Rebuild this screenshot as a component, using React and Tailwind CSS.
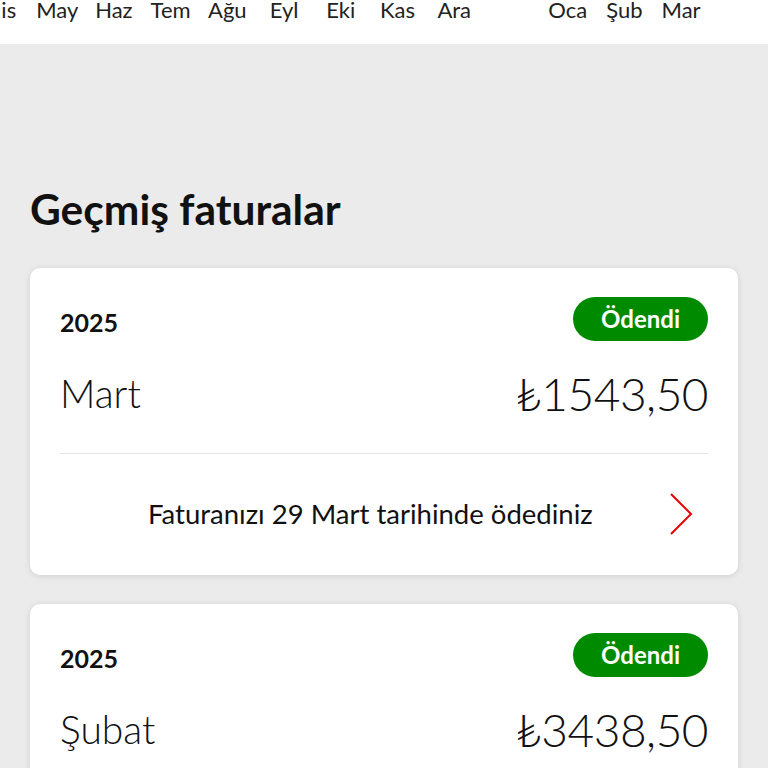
import React from "react";

const months = ["Nis","May","Haz","Tem","Ağu","Eyl","Eki","Kas","Ara","","Oca","Şub","Mar"];

function Chevron() {
  return (
    <svg width="26" height="44" viewBox="0 0 26 44" fill="none">
      <path d="M3 2 L23 22 L3 42" stroke="#e60000" strokeWidth="2" strokeLinejoin="miter" />
    </svg>
  );
}

function Card({ month, amount, footer }) {
  return (
    <div className="bg-white rounded-[10px] shadow-[0_1px_6px_rgba(0,0,0,0.12)] px-[30px] pt-[29px] shrink-0">
      <div className="flex items-center justify-between">
        <span className="text-[25px] font-bold text-[#111] leading-none mt-[8px]">2025</span>
        <span className="bg-[#008a00] text-white font-bold text-[24px] leading-none rounded-full px-[28px] h-[44px] flex items-center">Ödendi</span>
      </div>
      <div className="flex items-center justify-between mt-[30px]">
        <span className="text-[39px] font-light text-[#111] leading-none">{month}</span>
        <span className="text-[46px] font-light text-[#111] leading-none tracking-[-0.5px]">{amount}</span>
      </div>
      <div className="h-px bg-[#e4e4e4] mt-[36px]" />
      <div className="flex items-center h-[121px] pl-[88px] pr-[14px]">
        <span className="flex-1 text-[27.5px] text-[#111]">{footer}</span>
        <Chevron />
      </div>
    </div>
  );
}

export default function App() {
  return (
    <div className="w-[768px] h-[768px] overflow-hidden bg-[#ebebeb]" style={{ fontFamily: "Lato, 'Open Sans', sans-serif" }}>
      <div className="bg-white h-[44px] relative overflow-hidden">
        <div className="flex ml-[-27.9px] mt-[-8px]">
          {months.map((m, i) => (
            <span key={i} className="w-[56.73px] shrink-0 text-center text-[22px] text-[#222] leading-[36px]">{m}</span>
          ))}
        </div>
      </div>
      <div className="px-[30px]">
        <h2 className="text-[42.5px] font-bold text-[#111] mt-[144px] leading-none">Geçmiş faturalar</h2>
        <div className="mt-[37px] flex flex-col gap-[29px]">
          <Card month="Mart" amount="₺1543,50" footer="Faturanızı 29 Mart tarihinde ödediniz" />
          <Card month="Şubat" amount="₺3438,50" footer="Faturanızı 28 Şubat tarihinde ödediniz" />
        </div>
      </div>
    </div>
  );
}
